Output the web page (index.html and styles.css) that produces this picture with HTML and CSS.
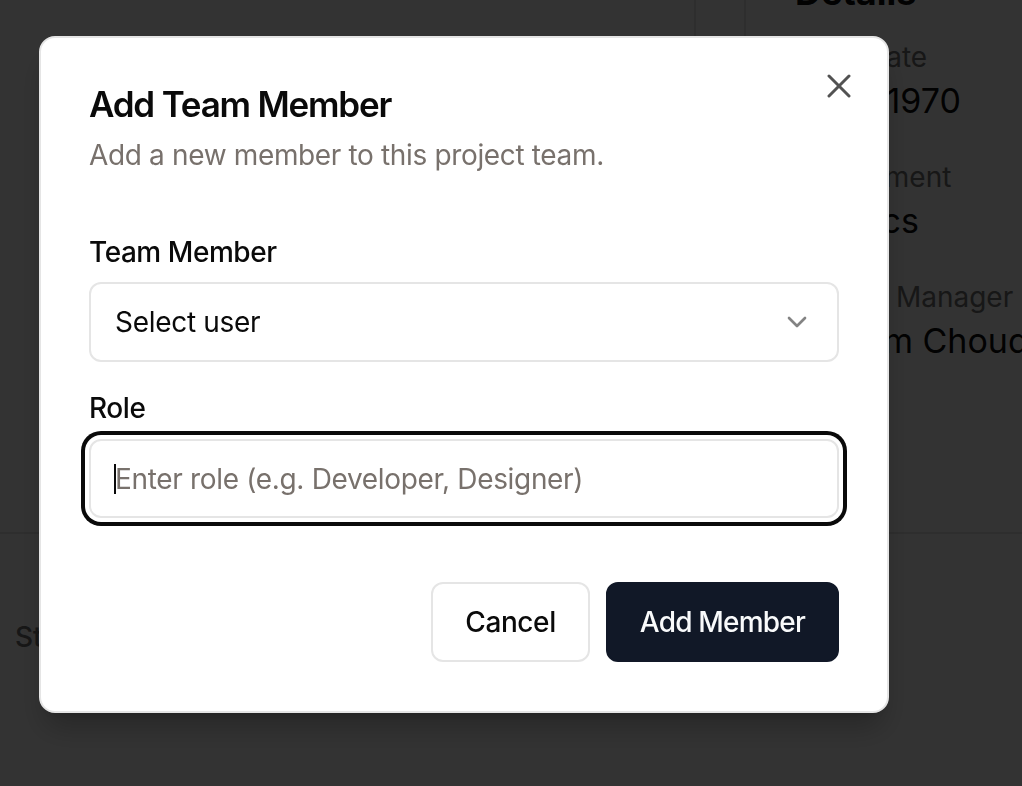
FILE: index.html
```html
<!DOCTYPE html>
<html lang="en">
<head>
<meta charset="utf-8">
<title>Add Team Member</title>
<link rel="stylesheet" href="styles.css">
</head>
<body>
<div class="page">
  <div class="top">
    <main class="main"></main>
    <div class="gutter"></div>
    <aside class="sidebar">
      <h2 class="side-title">Details</h2>
      <dl class="details">
        <div class="detail"><dt>Start Date</dt><dd>1 Jan 1970</dd></div>
        <div class="detail"><dt>Department</dt><dd>Physics</dd></div>
        <div class="detail"><dt>Project Manager</dt><dd>Shivam Choudhary</dd></div>
      </dl>
    </aside>
  </div>
  <div class="bottom">
    <span class="bottom-label">Status</span>
  </div>
</div>

<div class="overlay"></div>

<div class="dialog" role="dialog" aria-labelledby="dlg-title">
  <div class="dialog-header">
    <h2 id="dlg-title" class="dialog-title">Add Team Member</h2>
    <p class="dialog-desc">Add a new member to this project team.</p>
  </div>
  <form class="dialog-form">
    <div class="field">
      <label class="field-label">Team Member</label>
      <div class="select">
        <span class="select-value">Select user</span>
        <svg class="chev" width="32" height="32" viewBox="0 0 24 24" fill="none" stroke="currentColor" stroke-width="2" stroke-linecap="round" stroke-linejoin="round"><path d="m6 9 6 6 6-6"/></svg>
      </div>
    </div>
    <div class="field">
      <label class="field-label" for="role">Role</label>
      <div class="input-wrap">
        <input id="role" class="input" type="text" placeholder="Enter role (e.g. Developer, Designer)">
        <span class="caret"></span>
      </div>
    </div>
  </form>
  <div class="dialog-footer">
    <button class="btn btn-outline" type="button">Cancel</button>
    <button class="btn btn-primary" type="button">Add Member</button>
  </div>
  <button class="close" type="button" aria-label="Close">
    <svg width="40" height="40" viewBox="0 0 24 24" fill="none" stroke="currentColor" stroke-width="1.8" stroke-linecap="round" stroke-linejoin="round"><path d="M18 6 6 18"/><path d="m6 6 12 12"/></svg>
  </button>
</div>
</body>
</html>
```

FILE: styles.css
```css
* { box-sizing: border-box; }
html, body { margin: 0; padding: 0; }
body {
  font-family: Inter, "Noto Sans", "Liberation Sans", sans-serif;
  color: #0a0a0a;
  background: #fff;
  width: 1022px;
  height: 786px;
  overflow: hidden;
}

/* background page */
.page { width: 1022px; }
.top {
  display: flex;
  height: 534px;
  border-bottom: 2px solid #e5e5e5;
}
.main { width: 694px; flex: none; }
.gutter {
  width: 52px;
  flex: none;
  border-left: 2px solid #e5e5e5;
  border-right: 2px solid #e5e5e5;
}
.sidebar { flex: 1; padding-left: 49px; white-space: nowrap; overflow: hidden; }
.side-title {
  margin: -28px 0 25px;
  font-size: 36px;
  line-height: 40px;
  font-weight: 700;
}
.details { margin: 0; display: flex; flex-direction: column; gap: 36px; }
.detail dt { font-size: 28px; line-height: 40px; color: #737373; }
.detail dd { margin: 4px 0 0; font-size: 34px; line-height: 40px; font-weight: 400; color: #0a0a0a; }
.bottom { padding: 83px 0 0 15px; }
.bottom-label { font-size: 28px; line-height: 40px; color: #737373; font-weight: 500; }

/* overlay */
.overlay {
  position: fixed;
  inset: 0;
  background: rgba(0, 0, 0, 0.8);
}

/* dialog */
.dialog {
  position: fixed;
  left: 39px;
  top: 36px;
  width: 850px;
  background: #fff;
  border: 2px solid #e5e5e5;
  border-radius: 16px;
  padding: 48px 48px 49px;
  display: flex;
  flex-direction: column;
  gap: 32px;
  box-shadow: 0 20px 30px -6px rgba(0,0,0,0.25), 0 8px 12px -8px rgba(0,0,0,0.2);
}
.dialog-header { display: flex; flex-direction: column; gap: 13px; }
.dialog-title {
  margin: 0;
  font-size: 35px;
  line-height: 36px;
  font-weight: 600;
  letter-spacing: -1.2px;
}
.dialog-desc {
  margin: 0;
  font-size: 28px;
  line-height: 40px;
  color: #78716c;
  letter-spacing: -0.35px;
}
.dialog-form {
  padding: 31px 0 32px;
  display: flex;
  flex-direction: column;
  gap: 32px;
}
.field { display: flex; flex-direction: column; gap: 16px; }
.field-label { font-size: 28px; line-height: 28px; font-weight: 500; letter-spacing: -0.45px; }
.select {
  height: 80px;
  border: 2px solid #e5e5e5;
  border-radius: 12px;
  padding: 0 24px;
  display: flex;
  align-items: center;
  justify-content: space-between;
  font-size: 28px;
}
.select-value { letter-spacing: -0.3px; }
.chev { color: #0a0a0a; opacity: 0.5; }
.input-wrap { position: relative; margin-top: 1px; }
.input {
  display: block;
  width: 100%;
  height: 79px;
  border: 2px solid #e5e5e5;
  border-radius: 12px;
  padding: 0 24px;
  font-family: inherit;
  font-size: 28px;
  letter-spacing: -0.33px;
  color: #0a0a0a;
  outline: none;
  box-shadow: 0 0 0 4px #fff, 0 0 0 8px #0a0a0a;
}
.input::placeholder { color: #78716c; opacity: 1; }
.caret {
  position: absolute;
  left: 25px;
  top: 25px;
  width: 2px;
  height: 30px;
  background: #0a0a0a;
}
.dialog-footer { display: flex; justify-content: flex-end; gap: 16px; }
.btn {
  height: 80px;
  padding: 0 32px;
  border-radius: 12px;
  font-family: inherit;
  font-size: 28px;
  font-weight: 500;
  letter-spacing: -0.4px;
  cursor: pointer;
}
.btn-outline { background: #fff; border: 2px solid #e5e5e5; color: #0a0a0a; }
.btn-primary { background: #111827; border: 2px solid #111827; color: #f9fafb; letter-spacing: -0.8px; }
.close {
  position: absolute;
  right: 28px;
  top: 28px;
  width: 40px;
  height: 40px;
  padding: 0;
  border: 0;
  background: transparent;
  color: #0a0a0a;
  opacity: 0.7;
  display: flex;
}
```
